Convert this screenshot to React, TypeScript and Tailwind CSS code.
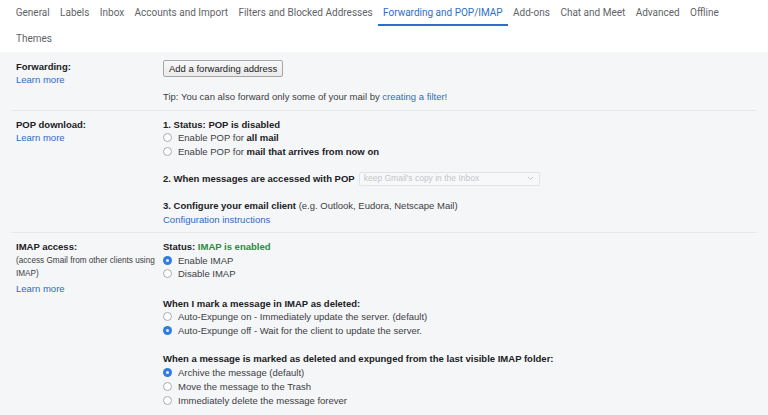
const tabs = [
  "General",
  "Labels",
  "Inbox",
  "Accounts and Import",
  "Filters and Blocked Addresses",
  "Forwarding and POP/IMAP",
  "Add-ons",
  "Chat and Meet",
  "Advanced",
  "Offline",
];

function Radio({ checked, children }: { checked?: boolean; children: React.ReactNode }) {
  return (
    <div className="flex items-center gap-[6px]">
      {checked ? (
        <span className="w-[9px] h-[9px] rounded-full bg-[#2f7de1] flex items-center justify-center shrink-0">
          <span className="w-[3px] h-[3px] rounded-full bg-[#e8f0fc]" />
        </span>
      ) : (
        <span className="w-[9px] h-[9px] rounded-full border border-[#a9adb2] bg-white shrink-0" />
      )}
      <span>{children}</span>
    </div>
  );
}

function Section({ label, children, className }: { label: React.ReactNode; children: React.ReactNode; className?: string }) {
  return (
    <div className={`flex ${className ?? ""}`}>
      <div className="w-[151px] pl-1 shrink-0">{label}</div>
      <div className="flex-1">{children}</div>
    </div>
  );
}

export default function App() {
  return (
    <div
      className="w-[768px] h-[415px] overflow-hidden bg-[#f5f6f7] text-[9.5px] leading-[13.5px] text-[#3c4043]"
      style={{ fontFamily: '"Liberation Sans", Arial, sans-serif' }}
    >
      {/* Settings tabs */}
      <div className="bg-white h-[52px] pl-[10.5px] text-[10px] text-[#5f6368]" style={{ fontFamily: "Roboto, sans-serif" }}>
        <div className="flex h-[26px]">
          {tabs.map((t) => (
            <div
              key={t}
              className={`px-[5.2px] flex items-center ${
                t === "Forwarding and POP/IMAP" ? "text-[#2d6fc7] border-b-2 border-[#2d6fc7] pt-[2px]" : ""
              }`}
            >
              {t}
            </div>
          ))}
        </div>
        <div className="flex h-[26px] items-center px-[5.5px]">Themes</div>
      </div>

      <div className="px-3">
        {/* Forwarding */}
        <Section
          className="pt-[8px] pb-[6px] border-b border-[#e6e8eb]"
          label={
            <>
              <div className="font-bold text-[#202124]">Forwarding:</div>
              <div className="text-[#2f6bbf] -mt-px">Learn more</div>
            </>
          }
        >
          <button className="h-[17px] px-[5px] border border-[#a6a6a6] rounded-[2px] bg-gradient-to-b from-[#f8f8f8] to-[#ebebeb] text-[#222] text-[9.5px] leading-[15px]">
            Add a forwarding address
          </button>
          <div className="mt-[13px]">
            Tip: You can also forward only some of your mail by <span className="text-[#2f6bbf]">creating a filter!</span>
          </div>
        </Section>

        {/* POP */}
        <Section
          className="pt-[7px] pb-[6px] border-b border-[#e6e8eb]"
          label={
            <>
              <div className="font-bold text-[#202124]">POP download:</div>
              <div className="text-[#2f6bbf]">Learn more</div>
            </>
          }
        >
          <div className="font-bold text-[#202124]">1. Status: POP is disabled</div>
          <Radio>
            Enable POP for <b className="text-[#202124]">all mail</b>
          </Radio>
          <Radio>
            Enable POP for <b className="text-[#202124]">mail that arrives from now on</b>
          </Radio>
          <div className="mt-[13.5px] flex items-center gap-[4px]">
            <b className="text-[#202124]">2. When messages are accessed with POP</b>
            <div className="w-[181px] h-[14px] border border-[#e1e3e6] rounded-[2px] bg-[#f7f8f9] flex items-center justify-between pl-[4px] pr-[5px] text-[#c3c6ca] text-[8.5px]">
              <span>keep Gmail's copy in the Inbox</span>
              <svg width="7" height="5" viewBox="0 0 7 5" fill="none">
                <path d="M1 1l2.5 2.5L6 1" stroke="#c3c6ca" strokeWidth="1" />
              </svg>
            </div>
          </div>
          <div className="mt-[13.5px]">
            <b className="text-[#202124]">3. Configure your email client</b> (e.g. Outlook, Eudora, Netscape Mail)
          </div>
          <div className="text-[#2f6bbf]">Configuration instructions</div>
        </Section>

        {/* IMAP */}
        <Section
          className="pt-[7px]"
          label={
            <>
              <div className="font-bold text-[#202124]">IMAP access:</div>
              <div className="text-[8.2px] text-[#3c4043]">
                (access Gmail from other clients using
                <br />
                IMAP)
              </div>
              <div className="text-[#2f6bbf] mt-[1px]">Learn more</div>
            </>
          }
        >
          <div className="font-bold text-[#202124]">
            Status: <span className="text-[#2d8a3e]">IMAP is enabled</span>
          </div>
          <Radio checked>Enable IMAP</Radio>
          <Radio>Disable IMAP</Radio>
          <div className="mt-[16px] font-bold text-[#202124]">When I mark a message in IMAP as deleted:</div>
          <Radio>Auto-Expunge on - Immediately update the server. (default)</Radio>
          <Radio checked>Auto-Expunge off - Wait for the client to update the server.</Radio>
          <div className="mt-[15px] font-bold text-[#202124]">
            When a message is marked as deleted and expunged from the last visible IMAP folder:
          </div>
          <div className="leading-[14px]">
            <Radio checked>Archive the message (default)</Radio>
            <Radio>Move the message to the Trash</Radio>
            <Radio>Immediately delete the message forever</Radio>
          </div>
        </Section>
      </div>
    </div>
  );
}
